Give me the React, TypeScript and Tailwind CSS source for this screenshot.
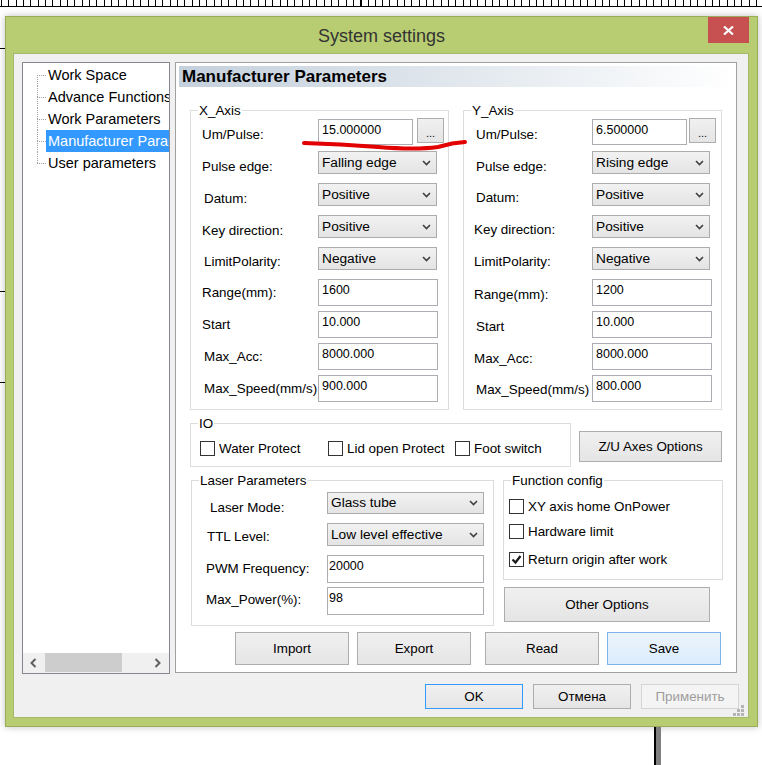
import React from 'react'

type AxisRow = { label: string; kind: 'pulse' | 'select' | 'input'; value: string; lx: string; ly: string }

const X_AXIS: AxisRow[] = [
  { label: 'Um/Pulse:', kind: 'pulse', value: '15.000000', lx: 'pl-[11px]', ly: 'pt-[8px]' },
  { label: 'Pulse edge:', kind: 'select', value: 'Falling edge', lx: 'pl-[11px]', ly: 'pt-[8px]' },
  { label: 'Datum:', kind: 'select', value: 'Positive', lx: 'pl-[13px]', ly: 'pt-[8px]' },
  { label: 'Key direction:', kind: 'select', value: 'Positive', lx: 'pl-[11px]', ly: 'pt-[8px]' },
  { label: 'LimitPolarity:', kind: 'select', value: 'Negative', lx: 'pl-[13px]', ly: 'pt-[7px]' },
  { label: 'Range(mm):', kind: 'input', value: '1600', lx: 'pl-[11px]', ly: 'pt-[6px]' },
  { label: 'Start', kind: 'input', value: '10.000', lx: 'pl-[11px]', ly: 'pt-[6px]' },
  { label: 'Max_Acc:', kind: 'input', value: '8000.000', lx: 'pl-[13px]', ly: 'pt-[6px]' },
  { label: 'Max_Speed(mm/s)', kind: 'input', value: '900.000', lx: 'pl-[13px]', ly: 'pt-[6px]' },
]

const Y_AXIS: AxisRow[] = [
  { label: 'Um/Pulse:', kind: 'pulse', value: '6.500000', lx: 'pl-[12px]', ly: 'pt-[8px]' },
  { label: 'Pulse edge:', kind: 'select', value: 'Rising edge', lx: 'pl-[12px]', ly: 'pt-[8px]' },
  { label: 'Datum:', kind: 'select', value: 'Positive', lx: 'pl-[12px]', ly: 'pt-[7px]' },
  { label: 'Key direction:', kind: 'select', value: 'Positive', lx: 'pl-[10px]', ly: 'pt-[7px]' },
  { label: 'LimitPolarity:', kind: 'select', value: 'Negative', lx: 'pl-[10px]', ly: 'pt-[7px]' },
  { label: 'Range(mm):', kind: 'input', value: '1200', lx: 'pl-[10px]', ly: 'pt-[8px]' },
  { label: 'Start', kind: 'input', value: '10.000', lx: 'pl-[12px]', ly: 'pt-[8px]' },
  { label: 'Max_Acc:', kind: 'input', value: '8000.000', lx: 'pl-[10px]', ly: 'pt-[8px]' },
  { label: 'Max_Speed(mm/s)', kind: 'input', value: '800.000', lx: 'pl-[12px]', ly: 'pt-[7px]' },
]

const TREE = ['Work Space', 'Advance Functions', 'Work Parameters', 'Manufacturer Parameters', 'User parameters']

function Ruler() {
  const ticks = Array.from({ length: 104 }, (_, i) => Math.round(1 + i * 7.33) + 0.5)
  return (
    <svg width="762" height="8" className="block" shapeRendering="crispEdges">
      <line x1="0" y1="6.5" x2="762" y2="6.5" stroke="#000" />
      {ticks.map((x) => (
        <line key={x} x1={x} y1="0" x2={x} y2="7" stroke="#000" />
      ))}
      <line x1="361.5" y1="0" x2="361.5" y2="7" stroke="#000" />
    </svg>
  )
}

function Chevron() {
  return (
    <svg width="9" height="6" viewBox="0 0 9 6" className="shrink-0">
      <path d="M1 1l3.5 3.5L8 1" stroke="#404040" strokeWidth="1.6" fill="none" />
    </svg>
  )
}

function Select({ value, className }: { value: string; className: string }) {
  return (
    <div className={`flex shrink-0 items-center justify-between border border-[#acacac] bg-linear-to-b from-[#f2f2f2] to-[#e4e4e4] pl-[3px] pr-[5px] text-[13.7px] leading-[16px] ${className}`}>
      <span className="whitespace-nowrap">{value}</span>
      <Chevron />
    </div>
  )
}

function Field({ value, className }: { value: string; className: string }) {
  return (
    <div className={`shrink-0 border border-[#abadb3] bg-white pt-[3px] text-[12.5px] leading-[15px] ${className}`}>{value}</div>
  )
}

function Btn({ label, className = '' }: { label: string; className?: string }) {
  return (
    <button className={`flex shrink-0 items-center justify-center border text-[13.4px] leading-[16px] ${className}`}>{label}</button>
  )
}

const PLAIN = 'border-[#adadad] bg-linear-to-b from-[#f0f0f0] to-[#e5e5e5] text-black'

function Check({ checked = false }: { checked?: boolean }) {
  return (
    <span className="flex h-[15px] w-[15px] shrink-0 items-center justify-center border border-[#333333] bg-white">
      {checked && (
        <svg width="11" height="11" viewBox="0 0 11 11">
          <path d="M1.5 5.5l3 3 5-6.5" stroke="#1a1a1a" strokeWidth="2.2" fill="none" />
        </svg>
      )}
    </span>
  )
}

function Group({ title, className, children }: { title: string; className: string; children: React.ReactNode }) {
  return (
    <div className={`relative shrink-0 border border-[#dcdcdc] ${className}`}>
      <span className="absolute -top-[8px] left-[7px] bg-white px-[1px] text-[13.4px] leading-[15px]">{title}</span>
      {children}
    </div>
  )
}

function Axis({ title, rows, labelW, selectW, inputW, btnGap, className = '' }: {
  title: string
  rows: AxisRow[]
  labelW: string
  selectW: string
  inputW: string
  btnGap: string
  className?: string
}) {
  return (
    <Group title={title} className={`h-[300px] w-[259px] pt-[8px] ${className}`}>
      {rows.map((r, i) => (
        <div key={r.label} className={`flex ${i < rows.length - 1 ? 'h-[32px]' : ''}`}>
          <div className={`shrink-0 whitespace-nowrap text-[13.4px] leading-[15px] ${labelW} ${r.lx} ${r.ly}`}>{r.label}</div>
          {r.kind === 'pulse' && (
            <>
              <Field value={r.value} className="h-[26px] w-[95px] pl-[3px]" />
              <button className={`-mt-px flex h-[25px] w-[27px] shrink-0 items-center justify-center border pt-[5px] text-[11px] leading-[11px] ${PLAIN} ${btnGap}`}>...</button>
            </>
          )}
          {r.kind === 'select' && <Select value={r.value} className={`h-[23px] ${selectW}`} />}
          {r.kind === 'input' && <Field value={r.value} className={`h-[27px] pl-[3px] ${inputW}`} />}
        </div>
      ))}
    </Group>
  )
}

function Tree() {
  return (
    <div className="flex h-[612px] w-[148px] shrink-0 flex-col border border-[#828790] bg-white">
      <div className="flex-1 overflow-hidden pl-[14px] pt-[1px]">
        {TREE.map((t, i) => (
          <div key={t} className="flex h-[22px]">
            <div className="flex w-[9px] shrink-0 flex-col">
              <div className={`h-[11px] ${i > 0 ? 'border-l border-dotted border-[#a0a0a0]' : ''}`} />
              <div className={`h-[11px] border-t border-dotted border-[#a0a0a0] ${i < TREE.length - 1 ? 'border-l' : ''}`} />
            </div>
            <div className={`whitespace-nowrap px-[2px] text-[14.5px] leading-[22px] ${i === 3 ? 'bg-[#3399ff] text-white' : 'text-black'}`}>{t}</div>
          </div>
        ))}
      </div>
      <div className="flex h-[20px] items-center bg-[#f0f0f0]">
        <div className="flex w-[20px] justify-center">
          <svg width="7" height="10" viewBox="0 0 7 10">
            <path d="M5.5 1L1.5 5l4 4" stroke="#606060" strokeWidth="2" fill="none" />
          </svg>
        </div>
        <div className="ml-[2px] h-[19px] w-[77px] self-start bg-[#cdcdcd]" />
        <div className="flex-1" />
        <div className="mr-[2px] flex w-[20px] justify-center">
          <svg width="7" height="10" viewBox="0 0 7 10">
            <path d="M1.5 1l4 4-4 4" stroke="#606060" strokeWidth="2" fill="none" />
          </svg>
        </div>
      </div>
    </div>
  )
}

function Panel() {
  return (
    <div className="ml-[5px] flex h-[611px] w-[562px] shrink-0 flex-col border border-[#a0a0a0] bg-white px-[3px] pt-[3px]">
      <div className="h-[21px] w-[556px] bg-linear-to-r from-[#c4d0dc] to-white pl-[3px] text-[17px] font-bold leading-[21px]">
        Manufacturer Parameters
      </div>

      {/* axes */}
      <div className="mt-[23px] flex">
        <Axis title="X_Axis" rows={X_AXIS} labelW="w-[127px]" selectW="w-[119px]" inputW="w-[120px]" btnGap="ml-[4px]" className="ml-[11px]" />
        <Axis title="Y_Axis" rows={Y_AXIS} labelW="w-[128px]" selectW="w-[118px]" inputW="w-[120px]" btnGap="ml-[2px]" className="ml-[14px]" />
      </div>

      {/* IO */}
      <div className="mt-[13px] flex items-start">
        <Group title="IO" className="ml-[11px] h-[44px] w-[381px]">
          <div className="flex pl-[9px] pt-[17px] text-[13.4px] leading-[15px]">
            <div className="flex w-[128px] shrink-0 items-center gap-[4px]"><Check />Water Protect</div>
            <div className="flex w-[127px] shrink-0 items-center gap-[4px]"><Check />Lid open Protect</div>
            <div className="flex shrink-0 items-center gap-[4px]"><Check />Foot switch</div>
          </div>
        </Group>
        <Btn label="Z/U Axes Options" className={`ml-[8px] mt-[8px] h-[31px] w-[143px] ${PLAIN}`} />
      </div>

      {/* laser + function */}
      <div className="mt-[13px] flex items-start">
        <Group title="Laser Parameters" className="ml-[12px] h-[146px] w-[303px] pt-[11px]">
          <div className="flex h-[31px]">
            <div className="w-[135px] shrink-0 pl-[18px] pt-[8px] text-[13.4px] leading-[15px]">Laser Mode:</div>
            <Select value="Glass tube" className="h-[22px] w-[157px]" />
          </div>
          <div className="flex h-[32px]">
            <div className="w-[135px] shrink-0 pl-[15px] pt-[6px] text-[13.4px] leading-[15px]">TTL Level:</div>
            <Select value="Low level effective" className="h-[23px] w-[157px]" />
          </div>
          <div className="flex h-[32px]">
            <div className="w-[135px] shrink-0 pl-[14px] pt-[6px] text-[13.4px] leading-[15px]">PWM Frequency:</div>
            <Field value="20000" className="h-[28px] w-[157px] pl-[1px]" />
          </div>
          <div className="flex">
            <div className="w-[135px] shrink-0 pl-[14px] pt-[5px] text-[13.4px] leading-[15px]">Max_Power(%):</div>
            <Field value="98" className="h-[28px] w-[157px] pl-[1px]" />
          </div>
        </Group>

        <div className="ml-[9px] flex flex-col">
          <Group title="Function config" className="h-[100px] w-[220px] pl-[5px] pt-[16px] text-[13.4px] leading-[15px]">
            <div className="flex h-[18px] items-center gap-[4px]"><Check />XY axis home OnPower</div>
            <div className="mt-[7px] flex h-[18px] items-center gap-[4px]"><Check />Hardware limit</div>
            <div className="mt-[10px] flex h-[18px] items-center gap-[4px]"><Check checked />Return origin after work</div>
          </Group>
          <Btn label="Other Options" className={`ml-[1px] mt-[7px] h-[35px] w-[206px] ${PLAIN}`} />
        </div>
      </div>

      {/* actions */}
      <div className="ml-[56px] mt-[6px] flex">
        <Btn label="Import" className={`h-[33px] w-[114px] ${PLAIN}`} />
        <Btn label="Export" className={`ml-[8px] h-[33px] w-[114px] ${PLAIN}`} />
        <Btn label="Read" className={`ml-[14px] h-[33px] w-[114px] ${PLAIN}`} />
        <Btn label="Save" className="ml-[8px] h-[33px] w-[114px] border-[#7eb4ea] bg-linear-to-b from-[#ecf4fc] to-[#dcecfc] text-black" />
      </div>
    </div>
  )
}

export default function App() {
  return (
    <div className="relative h-[765px] w-[762px] overflow-hidden bg-white font-['Liberation_Sans',Arial,sans-serif] text-black">
      <Ruler />

      {/* marks on the canvas behind the dialog */}
      <div className="absolute left-0 top-[48px] h-px w-[5px] bg-black" />
      <div className="absolute left-0 top-[291px] h-px w-[5px] bg-black" />
      <div className="absolute left-0 top-[382px] h-px w-[5px] bg-black" />
      <div className="absolute left-[654px] top-[727px] h-[38px] w-[7px] border-l-2 border-black bg-[#7f7f7f]" />

      {/* dialog */}
      <div className="ml-[5px] mt-[8px] h-[711px] w-[753px] border border-[#98ac5a] bg-[#b8cd72] shadow-[0_0_7px_rgba(0,0,0,0.25)]">
        <div className="grid h-[36px] grid-cols-[1fr_auto_1fr]">
          <div />
          <div className="pt-[1px] text-[18px] leading-[36px] text-[#333333]">System settings</div>
          <div className="flex justify-end pr-[8px]">
            <button className="flex h-[26px] w-[41px] items-center justify-center bg-[#c75050]">
              <svg width="11" height="9" viewBox="0 0 11 9">
                <path d="M1 0.5l9 8M10 0.5l-9 8" stroke="#fff" strokeWidth="2.2" />
              </svg>
            </button>
          </div>
        </div>

        <div className="relative ml-[7px] flex h-[665px] w-[736px] flex-col border border-[#a5b96a] bg-[#f0f0f0] pl-[8px] pt-[8px]">
          <div className="flex">
            <Tree />
            <Panel />
          </div>
          <div className="mt-[10px] flex justify-end gap-[10px] pr-[9px]">
            <Btn label="OK" className="h-[25px] w-[98px] border-[#3399ff] bg-linear-to-b from-[#f0f0f0] to-[#e5e5e5] text-black" />
            <Btn label="Отмена" className={`h-[25px] w-[98px] ${PLAIN}`} />
            <Btn label="Применить" className="h-[25px] w-[98px] border-[#d5d5d5] bg-[#f4f4f4] text-[#9d9d9d]" />
          </div>
          <svg width="12" height="11" viewBox="0 0 12 11" className="absolute bottom-[1px] right-[3px]">
            <g fill="#b4b4b4">
              <rect x="8" y="0" width="3" height="3" />
              <rect x="4" y="4" width="3" height="3" />
              <rect x="8" y="4" width="3" height="3" />
              <rect x="0" y="8" width="3" height="3" />
              <rect x="4" y="8" width="3" height="3" />
              <rect x="8" y="8" width="3" height="3" />
            </g>
          </svg>
        </div>
      </div>

      {/* hand-drawn red mark under the X Um/Pulse field */}
      <svg width="762" height="765" className="pointer-events-none absolute left-0 top-0">
        <path d="M304 143 Q 340 144 378 147 T 438 147 Q 446 145 452 143.5 L 465 142" stroke="#e30000" strokeWidth="4" strokeLinecap="round" fill="none" />
      </svg>
    </div>
  )
}
